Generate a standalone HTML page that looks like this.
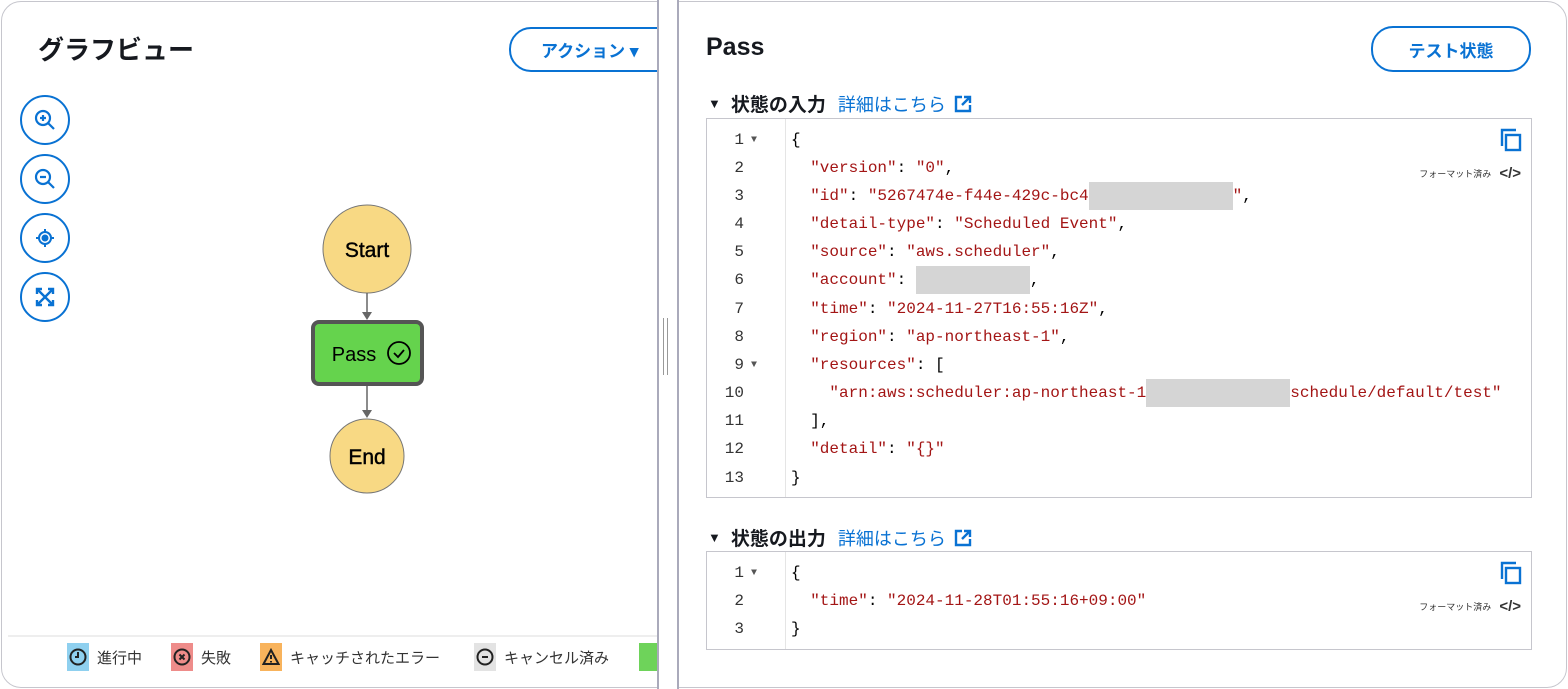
<!DOCTYPE html>
<html><head><meta charset="utf-8"><style>
*{margin:0;padding:0;box-sizing:border-box}
body{width:1568px;height:689px;background:#fff;position:relative;overflow:hidden;font-family:"Liberation Sans","Noto Sans CJK JP",sans-serif;color:#16191f}
.frame{position:absolute;left:1px;top:1px;width:1566px;height:687px;border:1px solid #c6c6cd;border-radius:20px}
.abs{position:absolute}
.btn{position:absolute;border:2px solid #0972d3;border-radius:22px;color:#0972d3;font-weight:bold;font-size:17px;display:flex;align-items:center;justify-content:center}
.zb{position:absolute;left:20px;width:50px;height:50px;border:2px solid #0972d3;border-radius:50%;display:flex;align-items:center;justify-content:center}
.code{position:absolute;left:706px;width:826px;border:1px solid #c6c6cd;background:#fff;font-family:"Liberation Mono",monospace;font-size:16px;line-height:20px}
.gut{position:absolute;left:0;top:0;bottom:0;width:79px;border-right:1px solid #e5e5e5}
.ln{position:absolute;left:0;width:37px;color:#333;text-align:right}
.arr{position:absolute;left:44px;font-size:10px;color:#555}
.tx{position:absolute;left:84px;white-space:pre;color:#000}
.s{color:#a31515}
.red{display:inline-block;background:#d5d5d5;height:20px;vertical-align:top;box-shadow:0 -4px 0 #d5d5d5,0 4px 0 #d5d5d5}
.sec{position:absolute;left:708px;font-size:19px;font-weight:bold;display:flex;align-items:center}
.sec .lk{color:#0972d3;font-weight:normal;font-size:18px;margin-left:12px}
.leg{position:absolute;top:643px;height:28px;display:flex;align-items:center;font-size:15px;color:#333}
.leg .ic{width:22px;height:28px;display:flex;align-items:center;justify-content:center;margin-right:8px}
.fmt{position:absolute;right:10px;font-size:9px;color:#333;font-family:"Liberation Sans","Noto Sans CJK JP",sans-serif;display:flex;align-items:center}
</style></head><body>
<div class="frame"></div>
<div class="abs" style="left:38px;top:30px;font-size:26px;font-weight:bold">グラフビュー</div>
<div class="btn" style="left:509px;top:27px;width:170px;height:45px;justify-content:flex-start;padding-left:30px">アクション ▾</div>
<div class="abs" style="left:657px;top:0;width:22px;height:689px;background:#fff;border-left:2px solid #aab;border-right:2px solid #aab"></div>
<div class="abs" style="left:663px;top:318px;width:5px;height:57px;border-left:1px solid #999;border-right:1px solid #999"></div>

<div class="zb" style="top:95px"><svg width="24" height="24" viewBox="0 0 24 24" fill="none" stroke="#0972d3" stroke-width="2.2"><circle cx="10" cy="10" r="7"/><path d="M15 15l6 6M10 7v6M7 10h6"/></svg></div>
<div class="zb" style="top:154px"><svg width="24" height="24" viewBox="0 0 24 24" fill="none" stroke="#0972d3" stroke-width="2.2"><circle cx="10" cy="10" r="7"/><path d="M15 15l6 6M7 10h6"/></svg></div>
<div class="zb" style="top:213px"><svg width="24" height="24" viewBox="0 0 24 24" fill="none" stroke="#0972d3" stroke-width="2"><circle cx="12" cy="12" r="6"/><circle cx="12" cy="12" r="2.5" fill="#0972d3"/><path d="M12 3v3M12 18v3M3 12h3M18 12h3"/></svg></div>
<div class="zb" style="top:272px"><svg width="22" height="22" viewBox="0 0 22 22" fill="none" stroke="#0972d3" stroke-width="2.4"><path d="M3 8V3h5M14 3h5v5M19 14v5h-5M8 19H3v-5M3 3l16 16M19 3L3 19"/></svg></div>

<svg class="abs" style="left:0;top:0" width="657" height="640">
<ellipse cx="367" cy="249" rx="44" ry="44" fill="#f8d984" stroke="#777"/>
<text x="367" y="257" font-size="21" text-anchor="middle" font-family="Liberation Sans" fill="#000" stroke="#000" stroke-width="0.4">Start</text>
<path d="M367 293v24" stroke="#666" stroke-width="1.5"/><path d="M362 312l5 8 5-8z" fill="#666"/>
<rect x="313" y="322" width="109" height="62" rx="6" fill="#65d34d" stroke="#555" stroke-width="4"/>
<text x="354" y="361" font-size="20" text-anchor="middle" font-family="Liberation Sans" fill="#000">Pass</text>
<circle cx="399" cy="353" r="11" fill="none" stroke="#000" stroke-width="1.8"/><path d="M394 353l4 4 6-7" fill="none" stroke="#000" stroke-width="1.8"/>
<path d="M367 386v28" stroke="#666" stroke-width="1.5"/><path d="M362 410l5 8 5-8z" fill="#666"/>
<circle cx="367" cy="456" r="37" fill="#f8d984" stroke="#777"/>
<text x="367" y="464" font-size="21" text-anchor="middle" font-family="Liberation Sans" fill="#000" stroke="#000" stroke-width="0.4">End</text>
<path d="M8 636H657" stroke="#ddd"/>
</svg>

<div class="leg" style="left:67px"><div class="ic" style="background:#8fd0ef;width:22px"><svg width="18" height="18" viewBox="0 0 18 18" fill="none" stroke="#222" stroke-width="2"><circle cx="9" cy="9" r="7.5"/><path d="M9 4v5H6"/></svg></div>進行中</div>
<div class="leg" style="left:171px"><div class="ic" style="background:#ee8c8a"><svg width="18" height="18" viewBox="0 0 18 18" fill="none" stroke="#222" stroke-width="2"><circle cx="9" cy="9" r="7.5"/><path d="M6.5 6.5l5 5M11.5 6.5l-5 5"/></svg></div>失敗</div>
<div class="leg" style="left:260px"><div class="ic" style="background:#f8b35c"><svg width="18" height="18" viewBox="0 0 18 18" fill="none" stroke="#222" stroke-width="2"><path d="M9 2L1.5 16h15z"/><path d="M9 7v4M9 13v1.5"/></svg></div>キャッチされたエラー</div>
<div class="leg" style="left:474px"><div class="ic" style="background:#e3e3e3"><svg width="18" height="18" viewBox="0 0 18 18" fill="none" stroke="#222" stroke-width="2"><circle cx="9" cy="9" r="7.5"/><path d="M6 9h6"/></svg></div>キャンセル済み</div>
<div class="leg" style="left:639px"><div class="ic" style="background:#6ed35a;width:18px"></div></div>

<div class="abs" style="left:706px;top:33px;font-size:25px;font-weight:bold">Pass</div>
<div class="btn" style="left:1371px;top:26px;width:160px;height:46px">テスト状態</div>

<div class="sec" style="top:90px"><span style="font-size:13px;margin-right:10px">▼</span>状態の入力<span class="lk">詳細はこちら</span><svg style="margin-left:8px" width="18" height="18" viewBox="0 0 18 18" fill="none" stroke="#0972d3" stroke-width="2.4"><path d="M8 2H2v14h14v-6M10 2h6v6M16 2L8 10"/></svg></div>
<div class="code" style="top:118px;height:380px">
<div class="gut"></div>
<svg class="abs" style="right:9px;top:9px" width="22" height="24" viewBox="0 0 22 24" fill="none" stroke="#0972d3" stroke-width="2.4"><path d="M2 18V2h14"/><rect x="6" y="7" width="14" height="15"/></svg>
<div class="fmt" style="top:45px">フォーマット済み <b style="font-size:15px;margin-left:8px;font-family:'Liberation Sans'">&lt;/&gt;</b></div>
<div class="ln" style="top:11px">1</div><div class="arr" style="top:12px">▼</div><div class="tx" style="top:11px">{</div>
<div class="ln" style="top:39px">2</div><div class="tx" style="top:39px">  <span class="s">"version"</span>: <span class="s">"0"</span>,</div>
<div class="ln" style="top:67px">3</div><div class="tx" style="top:67px">  <span class="s">"id"</span>: <span class="s">"5267474e-f44e-429c-bc4<span class="red" style="width:144px"></span>"</span>,</div>
<div class="ln" style="top:95px">4</div><div class="tx" style="top:95px">  <span class="s">"detail-type"</span>: <span class="s">"Scheduled Event"</span>,</div>
<div class="ln" style="top:123px">5</div><div class="tx" style="top:123px">  <span class="s">"source"</span>: <span class="s">"aws.scheduler"</span>,</div>
<div class="ln" style="top:151px">6</div><div class="tx" style="top:151px">  <span class="s">"account"</span>: <span class="red" style="width:114px"></span>,</div>
<div class="ln" style="top:180px">7</div><div class="tx" style="top:180px">  <span class="s">"time"</span>: <span class="s">"2024-11-27T16:55:16Z"</span>,</div>
<div class="ln" style="top:208px">8</div><div class="tx" style="top:208px">  <span class="s">"region"</span>: <span class="s">"ap-northeast-1"</span>,</div>
<div class="ln" style="top:236px">9</div><div class="arr" style="top:237px">▼</div><div class="tx" style="top:236px">  <span class="s">"resources"</span>: [</div>
<div class="ln" style="top:264px">10</div><div class="tx" style="top:264px">    <span class="s">"arn:aws:scheduler:ap-northeast-1<span class="red" style="width:144px"></span>schedule/default/test"</span></div>
<div class="ln" style="top:292px">11</div><div class="tx" style="top:292px">  ],</div>
<div class="ln" style="top:320px">12</div><div class="tx" style="top:320px">  <span class="s">"detail"</span>: <span class="s">"{}"</span></div>
<div class="ln" style="top:349px">13</div><div class="tx" style="top:349px">}</div>
</div>

<div class="sec" style="top:524px"><span style="font-size:13px;margin-right:10px">▼</span>状態の出力<span class="lk">詳細はこちら</span><svg style="margin-left:8px" width="18" height="18" viewBox="0 0 18 18" fill="none" stroke="#0972d3" stroke-width="2.4"><path d="M8 2H2v14h14v-6M10 2h6v6M16 2L8 10"/></svg></div>
<div class="code" style="top:551px;height:99px">
<div class="gut"></div>
<svg class="abs" style="right:9px;top:9px" width="22" height="24" viewBox="0 0 22 24" fill="none" stroke="#0972d3" stroke-width="2.4"><path d="M2 18V2h14"/><rect x="6" y="7" width="14" height="15"/></svg>
<div class="fmt" style="top:45px">フォーマット済み <b style="font-size:15px;margin-left:8px;font-family:'Liberation Sans'">&lt;/&gt;</b></div>
<div class="ln" style="top:11px">1</div><div class="arr" style="top:12px">▼</div><div class="tx" style="top:11px">{</div>
<div class="ln" style="top:39px">2</div><div class="tx" style="top:39px">  <span class="s">"time"</span>: <span class="s">"2024-11-28T01:55:16+09:00"</span></div>
<div class="ln" style="top:67px">3</div><div class="tx" style="top:67px">}</div>
</div>
</body></html>
